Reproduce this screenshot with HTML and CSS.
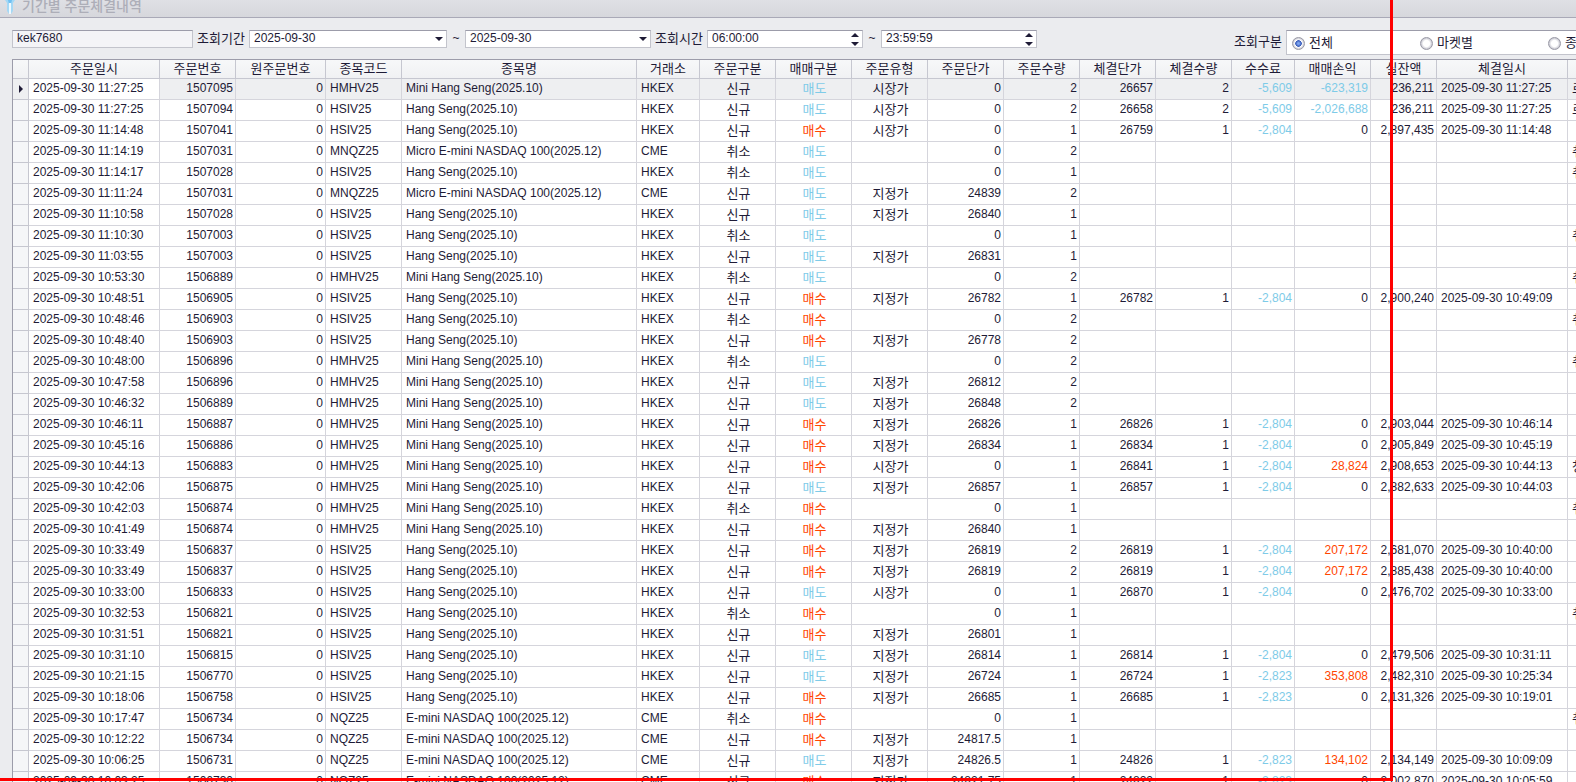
FILE: index.html
```html
<!DOCTYPE html>
<html lang="ko">
<head>
  <meta charset="UTF-8">
  <meta name="viewport" content="width=device-width, initial-scale=1.0">
  <title>기간별 주문체결내역</title>
  <link rel="stylesheet" href="styles.css">
</head>
<body>
  <header class="titlebar">
    <svg class="app-icon" width="12" height="14" viewBox="0 0 12 14">
      <path d="M1 0h10L9 3v8l-2 3H5l-2-3V3z" fill="#a5d8f5"/>
      <path d="M4 0h4L7 4v8H5V4z" fill="#6fc0f2"/>
      <path d="M5 3h2v11H5z" fill="#edf9ff"/>
    </svg>
    <h1>기간별 주문체결내역</h1>
  </header>

  <form class="filters">
    <input class="field account" type="text" value="kek7680" aria-label="계좌" readonly>
    <label for="dateFrom">조회기간</label>
    <span class="combo date-from">
      <select class="field" id="dateFrom"><option>2025-09-30</option></select>
      <svg width="8" height="4" viewBox="0 0 8 4"><path d="M0 0h8L4 4z"/></svg>
    </span>
    <span class="tilde">~</span>
    <span class="combo date-to">
      <select class="field" id="dateTo" aria-label="조회기간 종료"><option>2025-09-30</option></select>
      <svg width="8" height="4" viewBox="0 0 8 4"><path d="M0 0h8L4 4z"/></svg>
    </span>
    <label for="timeFrom">조회시간</label>
    <span class="combo time">
      <input class="field" type="text" id="timeFrom" value="06:00:00">
      <svg width="8" height="13" viewBox="0 0 8 13"><path d="M0 4h8L4 0zM0 9h8L4 13z"/></svg>
    </span>
    <span class="tilde">~</span>
    <span class="combo time">
      <input class="field" type="text" id="timeTo" value="23:59:59" aria-label="조회시간 종료">
      <svg width="8" height="13" viewBox="0 0 8 13"><path d="M0 4h8L4 0zM0 9h8L4 13z"/></svg>
    </span>
    <span class="group-label" id="groupLabel">조회구분</span>
    <div class="radios" role="radiogroup" aria-labelledby="groupLabel">
      <label><input type="radio" name="scope" checked>전체</label>
      <label><input type="radio" name="scope">마켓별</label>
      <label><input type="radio" name="scope">종목별</label>
    </div>
  </form>

  <main class="grid">
    <table>
      <colgroup>
        <col class="w-mark"><col class="w-date"><col class="w-col"><col class="w-org"><col class="w-col">
        <col class="w-name"><col class="w-short"><col class="w-col"><col class="w-col"><col class="w-col">
        <col class="w-col"><col class="w-col"><col class="w-col"><col class="w-col"><col class="w-short">
        <col class="w-col"><col class="w-bal"><col class="w-date"><col class="w-date">
      </colgroup>
      <thead>
        <tr>
          <th></th><th>주문일시</th><th>주문번호</th><th>원주문번호</th><th>종목코드</th>
          <th>종목명</th><th>거래소</th><th>주문구분</th><th>매매구분</th><th>주문유형</th>
          <th>주문단가</th><th>주문수량</th><th>체결단가</th><th>체결수량</th><th>수수료</th>
          <th>매매손익</th><th>실잔액</th><th>체결일시</th><th></th>
        </tr>
      </thead>
      <tbody id="orders"></tbody>
    </table>
  </main>
  <div class="guide"></div>

  <script>
    const products = {
      HMHV25: ['Mini Hang Seng(2025.10)', 'HKEX'],
      HSIV25: ['Hang Seng(2025.10)', 'HKEX'],
      MNQZ25: ['Micro E-mini NASDAQ 100(2025.12)', 'CME'],
      NQZ25: ['E-mini NASDAQ 100(2025.12)', 'CME']
    };

    // time|no|code|kind|side|type|price|qty|fill price|fill qty|fee|p&l|balance|fill time|note
    const orders = `11:27:25|1507095|HMHV25|신규|매도|시장가|0|2|26657|2|-5,609|-623,319|236,211|11:27:25|로스컷
11:27:25|1507094|HSIV25|신규|매도|시장가|0|2|26658|2|-5,609|-2,026,688|236,211|11:27:25|로스컷
11:14:48|1507041|HSIV25|신규|매수|시장가|0|1|26759|1|-2,804|0|2,897,435|11:14:48|
11:14:19|1507031|MNQZ25|취소|매도||0|2|||||||취소
11:14:17|1507028|HSIV25|취소|매도||0|1|||||||취소
11:11:24|1507031|MNQZ25|신규|매도|지정가|24839|2|||||||
11:10:58|1507028|HSIV25|신규|매도|지정가|26840|1|||||||
11:10:30|1507003|HSIV25|취소|매도||0|1|||||||취소
11:03:55|1507003|HSIV25|신규|매도|지정가|26831|1|||||||
10:53:30|1506889|HMHV25|취소|매도||0|2|||||||취소
10:48:51|1506905|HSIV25|신규|매수|지정가|26782|1|26782|1|-2,804|0|2,900,240|10:49:09|
10:48:46|1506903|HSIV25|취소|매수||0|2|||||||취소
10:48:40|1506903|HSIV25|신규|매수|지정가|26778|2|||||||
10:48:00|1506896|HMHV25|취소|매도||0|2|||||||취소
10:47:58|1506896|HMHV25|신규|매도|지정가|26812|2|||||||
10:46:32|1506889|HMHV25|신규|매도|지정가|26848|2|||||||
10:46:11|1506887|HMHV25|신규|매수|지정가|26826|1|26826|1|-2,804|0|2,903,044|10:46:14|
10:45:16|1506886|HMHV25|신규|매수|지정가|26834|1|26834|1|-2,804|0|2,905,849|10:45:19|
10:44:13|1506883|HMHV25|신규|매수|시장가|0|1|26841|1|-2,804|28,824|2,908,653|10:44:13|청산
10:42:06|1506875|HMHV25|신규|매도|지정가|26857|1|26857|1|-2,804|0|2,882,633|10:44:03|
10:42:03|1506874|HMHV25|취소|매수||0|1|||||||취소
10:41:49|1506874|HMHV25|신규|매수|지정가|26840|1|||||||
10:33:49|1506837|HSIV25|신규|매수|지정가|26819|2|26819|1|-2,804|207,172|2,681,070|10:40:00|
10:33:49|1506837|HSIV25|신규|매수|지정가|26819|2|26819|1|-2,804|207,172|2,885,438|10:40:00|
10:33:00|1506833|HSIV25|신규|매도|시장가|0|1|26870|1|-2,804|0|2,476,702|10:33:00|
10:32:53|1506821|HSIV25|취소|매수||0|1|||||||취소
10:31:51|1506821|HSIV25|신규|매수|지정가|26801|1|||||||
10:31:10|1506815|HSIV25|신규|매도|지정가|26814|1|26814|1|-2,804|0|2,479,506|10:31:11|
10:21:15|1506770|HSIV25|신규|매도|지정가|26724|1|26724|1|-2,823|353,808|2,482,310|10:25:34|
10:18:06|1506758|HSIV25|신규|매수|지정가|26685|1|26685|1|-2,823|0|2,131,326|10:19:01|
10:17:47|1506734|NQZ25|취소|매수||0|1|||||||취소
10:12:22|1506734|NQZ25|신규|매수|지정가|24817.5|1|||||||
10:06:25|1506731|NQZ25|신규|매도|지정가|24826.5|1|24826|1|-2,823|134,102|2,134,149|10:09:09|
10:03:25|1506730|NQZ25|신규|매수|지정가|24821.75|1|24822|1|-2,823|0|2,002,870|10:05:59|`;

    const day = '2025-09-30 ';
    const tbody = document.getElementById('orders');

    function addCell(tr, text, className) {
      const td = document.createElement('td');
      td.textContent = text;
      if (className) td.className = className;
      tr.appendChild(td);
      return td;
    }

    // Losses are blue, gains are red
    function signClass(value) {
      if (value.startsWith('-')) return 'num down';
      return value && value !== '0' ? 'num up' : 'num';
    }

    orders.split('\n').forEach(function(line, index) {
      const [time, no, code, kind, side, type, price, qty, fillPrice, fillQty,
        fee, profit, balance, fillTime, note] = line.split('|');
      const tr = document.createElement('tr');
      const mark = addCell(tr, '', 'mark');
      if (index === 0) {
        tr.className = 'selected';
        mark.innerHTML = '<svg width="4" height="8" viewBox="0 0 4 8"><path d="M0 0l4 4-4 4z"/></svg>';
      }
      addCell(tr, day + time, 'first');
      addCell(tr, no, 'num');
      addCell(tr, '0', 'num');
      addCell(tr, code);
      addCell(tr, products[code][0]);
      addCell(tr, products[code][1]);
      addCell(tr, kind, 'ko');
      addCell(tr, side, side === '매수' ? 'ko up' : 'ko down');
      addCell(tr, type, 'ko');
      [price, qty, fillPrice, fillQty].forEach(v => addCell(tr, v, 'num'));
      addCell(tr, fee, signClass(fee));
      addCell(tr, profit, signClass(profit));
      addCell(tr, balance, 'num');
      addCell(tr, fillTime ? day + fillTime : '');
      addCell(tr, note, 'note');
      tbody.appendChild(tr);
    });
  </script>
</body>
</html>
```
FILE: styles.css
```css
* {
  box-sizing: border-box;
}

body {
  margin: 0;
  height: 100vh;
  overflow: hidden;
  position: relative;
  display: flex;
  flex-direction: column;
  background-color: #ebecef;
  color: #1e1b36;
  font-family: "Liberation Sans", "Noto Sans CJK KR", sans-serif;
  font-size: 12px;
}

.titlebar {
  display: flex;
  align-items: flex-end;
  flex: none;
  height: 18px;
  padding-left: 4px;
  background: linear-gradient(#dfe0e5, #d6d7dc);
  border-bottom: 1px solid #a9a9b7;
}

.app-icon {
  margin-bottom: 3px;
}

.titlebar h1 {
  margin: 0 0 2px 6px;
  font-family: "Noto Sans CJK KR", sans-serif;
  font-size: 14px;
  font-weight: 500;
  line-height: 20px;
  color: #adaeb8;
}

.filters {
  display: flex;
  align-items: flex-start;
  gap: 4px;
  flex: none;
  height: 41px;
  padding: 12px 0 0 12px;
}

.filters label,
.group-label {
  flex: none;
  width: 48px;
  font-family: "Noto Sans CJK KR", sans-serif;
  font-size: 13px;
  line-height: 16px;
  white-space: nowrap;
}

.field {
  display: block;
  width: 100%;
  height: 18px;
  padding: 0 4px 2px;
  background-color: #fff;
  border: 1px solid #c3c4cc;
  border-top-color: #9c9caa;
  border-radius: 0;
  color: inherit;
  font: inherit;
  line-height: 14px;
  appearance: none;
  outline: none;
}

.account {
  flex: none;
  width: 181px;
  background-color: #f4f4f7;
}

.combo {
  position: relative;
  flex: none;
}

.combo svg {
  position: absolute;
  right: 4px;
  top: 0;
  bottom: 0;
  margin: auto;
  fill: #1e1b36;
  pointer-events: none;
}

.date-from {
  width: 198px;
}

.date-to {
  width: 186px;
}

.time {
  width: 156px;
}

.tilde {
  flex: none;
  width: 10px;
  line-height: 16px;
  text-align: center;
}

.group-label {
  margin-left: auto;
  line-height: 22px;
}

.radios {
  display: flex;
  flex: none;
  width: 290px;
  height: 25px;
  padding-left: 5px;
  background-color: #fff;
  border: 1px solid #c3c4cc;
  border-top-color: #9c9caa;
  border-right: none;
}

.radios label {
  display: flex;
  align-items: center;
  gap: 4px;
  width: 128px;
  padding-bottom: 1px;
}

.radios input {
  appearance: none;
  flex: none;
  width: 13px;
  height: 13px;
  margin: 2px 0 0;
  border: 1px solid #9a9aa6;
  border-radius: 50%;
  background: radial-gradient(#fff 40%, #c9c9d2 70%);
}

.radios input:checked {
  background: radial-gradient(#7fa6f0 10%, #3558b8 38%, #fff 46%, #c9c9d2 72%);
}

.grid {
  flex: 1;
  min-height: 0;
  margin-left: 12px;
  overflow: hidden;
  border-top: 1px solid #9c9caa;
  border-left: 1px solid #9c9caa;
  background-color: #fff;
}

table {
  width: 1686px;
  table-layout: fixed;
  border-collapse: separate;
  border-spacing: 0;
}

.w-mark { width: 16px; }
.w-date { width: 131px; }
.w-col { width: 76px; }
.w-org { width: 90px; }
.w-name { width: 235px; }
.w-short { width: 63px; }
.w-bal { width: 66px; }

th,
td {
  border-right: 1px solid #d5d5dc;
  border-bottom: 1px solid #d5d5dc;
  white-space: nowrap;
}

th {
  height: 19px;
  padding: 0 0 3px;
  background: linear-gradient(#f7f8f9, #f0f1f3);
  border-color: #c6c7d0;
  font-family: "Noto Sans CJK KR", sans-serif;
  font-size: 13px;
  font-weight: 400;
  line-height: 15px;
}

td {
  height: 21px;
  padding: 0 2px 2px 4px;
  line-height: 18px;
}

.mark {
  padding: 0 0 0 6px;
  background-color: #f5f6f8;
  border-color: #c6c7d0;
}

.mark svg {
  display: block;
  fill: #1e1b36;
}

.num {
  text-align: right;
}

.ko,
.note {
  font-family: "Noto Sans CJK KR", sans-serif;
  font-size: 13px;
}

.ko {
  text-align: center;
}

.up {
  color: #ff4500;
}

.down {
  color: #7ecbe8;
}

.selected td {
  background-color: #eeeff1;
}

.selected .first {
  background-color: #fff;
}

/* red marker lines over the window */
.guide {
  position: absolute;
  top: 0;
  left: 0;
  right: 183px;
  bottom: 1px;
  border-right: 3px solid #f00;
  border-bottom: 3px solid #f00;
  pointer-events: none;
}
```
